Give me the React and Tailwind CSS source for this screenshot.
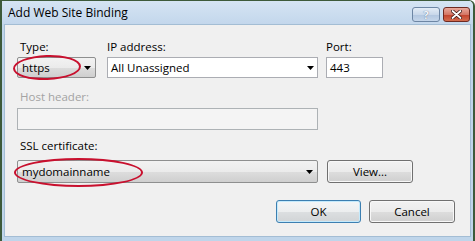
import React from 'react'

const font = { fontFamily: '"Open Sans", "Noto Sans", sans-serif' }

function Arrow() {
    return (
        <svg width="7" height="4" viewBox="0 0 7 4" className="shrink-0">
            <path d="M0 0h7L3.5 4z" fill="#000" />
        </svg>
    )
}

function Button({ children, focused }) {
    return (
        <div
            className={
                focused
                    ? 'h-[23px] w-[85px] flex items-center justify-center rounded-[3px] border border-[#3c7fb1] shadow-[inset_0_0_0_1px_#c4eafc] bg-[linear-gradient(to_bottom,#f4f6f7_0%,#eceeef_50%,#dcdfe1_51%,#d1d4d6_100%)] text-[11.5px] text-black'
                    : 'h-[23px] w-[86px] flex items-center justify-center rounded-[3px] border border-[#707070] shadow-[inset_0_0_0_1px_#f8f8f8] bg-[linear-gradient(to_bottom,#f2f2f2_0%,#ebebeb_50%,#dddddd_51%,#cfcfcf_100%)] text-[11.5px] text-black'
            }
        >
            {children}
        </div>
    )
}

export default function App() {
    return (
        <div
            style={font}
            className="w-[475px] h-[241px] flex flex-col bg-[#bfd5ea] border-l-2 border-t border-r-2 border-[#3d5a3a] rounded-tr-[6px] overflow-hidden"
        >
            {/* Title bar */}
            <div className="h-[23px] shrink-0 flex items-center pl-[6px] pr-[3px] bg-[linear-gradient(to_bottom,#d5e4f3_0%,#c3d7ec_100%)]">
                <span className="text-[12px] text-black leading-none">Add Web Site Binding</span>
                <div className="ml-auto flex gap-[3px] pt-[3px]">
                    <div className="w-[28px] h-[15px] rounded-[3px] border border-[#6d86a4] bg-[linear-gradient(to_bottom,#e3ecf6_0%,#c9d8ea_50%,#b1c6df_51%,#c5d6ea_100%)] flex items-center justify-center text-[11px] font-bold text-[#f4f7fb] [text-shadow:0_0_1px_#3b5478] leading-none">
                        ?
                    </div>
                    <div className="w-[27px] h-[15px] rounded-[3px] border border-[#6e2a22] bg-[linear-gradient(to_bottom,#e9a99c_0%,#d47766_50%,#c2412c_51%,#d36d4f_100%)] flex items-center justify-center">
                        <svg width="11" height="9" viewBox="0 0 11 9">
                            <path d="M1.5 1l8 7M9.5 1l-8 7" stroke="#3b1712" strokeWidth="3.4" strokeLinecap="round" />
                            <path d="M1.5 1l8 7M9.5 1l-8 7" stroke="#fff" strokeWidth="1.8" strokeLinecap="round" />
                        </svg>
                    </div>
                </div>
            </div>

            {/* Body */}
            <div className="flex-1 ml-[2px] mr-[2px] mb-[4px] bg-[#f0f0f0] border border-[#a3bdd4] relative pl-[12px] pt-[14px] text-[11.5px] text-black">
                {/* Row 1 */}
                <div className="flex">
                    <div className="w-[79px] flex flex-col">
                        <span className="h-[16px] leading-[16px] pl-[3px]">Type:</span>
                        <div className="relative mt-[2px] h-[21px] flex items-center pl-[4px] pr-[4px] rounded-[2px] border border-[#8e8f8f] bg-[linear-gradient(to_bottom,#f2f2f2_0%,#ebebeb_50%,#dddddd_51%,#cfcfcf_100%)]">
                            <span className="flex-1">https</span>
                            <Arrow />
                            <div className="absolute left-[-5px] top-[-3px] w-[68px] h-[25px] rounded-[50%] border-2 border-[#c8102e] -rotate-2" />
                        </div>
                    </div>
                    <div className="w-[211px] ml-[11px] flex flex-col">
                        <span className="h-[16px] leading-[16px]">IP address:</span>
                        <div className="mt-[2px] h-[21px] flex items-center pl-[3px] pr-[3px] border border-[#abadb3] bg-white">
                            <span className="flex-1">All Unassigned</span>
                            <Arrow />
                        </div>
                    </div>
                    <div className="w-[57px] ml-[8px] flex flex-col">
                        <span className="h-[16px] leading-[16px]">Port:</span>
                        <div className="mt-[2px] h-[21px] flex items-center pl-[3px] border border-[#abadb3] bg-white">
                            443
                        </div>
                    </div>
                </div>

                {/* Host header */}
                <div className="w-[301px] flex flex-col mt-[11px]">
                    <span className="h-[16px] leading-[16px] pl-[3px] text-[#a3a3a3]">Host header:</span>
                    <div className="mt-[3px] h-[22px] border border-[#adb2b5] bg-[#f4f4f4]" />
                </div>

                {/* SSL certificate */}
                <div className="flex flex-col mt-[8px]">
                    <span className="h-[16px] leading-[16px] pl-[3px]">SSL certificate:</span>
                    <div className="flex mt-[6px]">
                        <div className="relative w-[301px] h-[23px] flex items-center pl-[4px] pr-[4px] rounded-[2px] border border-[#8e8f8f] bg-[linear-gradient(to_bottom,#f2f2f2_0%,#ebebeb_50%,#dddddd_51%,#cfcfcf_100%)]">
                            <span className="flex-1">mydomainname</span>
                            <Arrow />
                            <div className="absolute left-[-4px] top-[-3px] w-[129px] h-[29px] rounded-[50%] border-2 border-[#c8102e]" />
                        </div>
                        <div className="ml-[9px]">
                            <Button>View...</Button>
                        </div>
                    </div>
                </div>

                {/* Buttons */}
                <div className="flex mt-[17px] pl-[259px] gap-[8px]">
                    <Button focused>OK</Button>
                    <Button>Cancel</Button>
                </div>
            </div>
        </div>
    )
}
